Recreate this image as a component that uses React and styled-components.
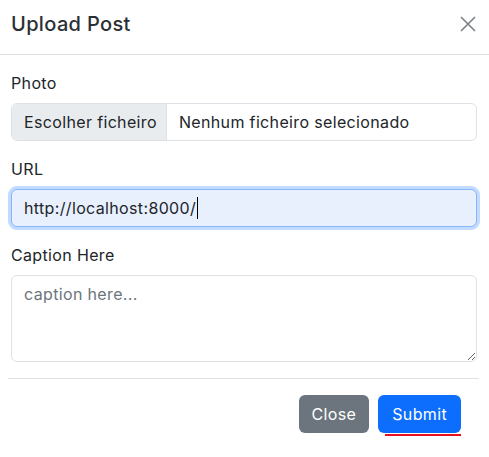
import styled, { createGlobalStyle } from "styled-components";

const GlobalStyle = createGlobalStyle`
  body {
    margin: 0;
    background: #fff;
    font-family: Inter, "Noto Sans", sans-serif;
    color: #212529;
    letter-spacing: 0.35px;
  }
`;

const UploadPost = () => {
  return (
    <Modal>
      <GlobalStyle />
      <Header>
        <Title>Upload Post</Title>
        <CloseIcon aria-label="Close">
          <svg width="16" height="16" viewBox="0 0 16 16">
            <path d="M1 1L15 15M15 1L1 15" stroke="#6c757d" strokeWidth="1.6" />
          </svg>
        </CloseIcon>
      </Header>
      <Body>
        <Field>
          <Label>Photo</Label>
          <FileInput>
            <FileButton>Escolher ficheiro</FileButton>
            <FileName>Nenhum ficheiro selecionado</FileName>
          </FileInput>
        </Field>
        <Field>
          <Label>URL</Label>
          <TextInput $focused>
            http://localhost:8000/
            <Caret />
          </TextInput>
        </Field>
        <Field>
          <Label>Caption Here</Label>
          <TextArea rows={3} placeholder="caption here..." />
        </Field>
        <Divider />
      </Body>
      <Footer>
        <Button $variant="secondary">Close</Button>
        <Button $variant="primary" $marked>
          Submit
        </Button>
      </Footer>
    </Modal>
  );
};

const Modal = styled.div`
  width: 489px;
  height: 457px;
  background: #fff;
  overflow: hidden;
`;

const Header = styled.div`
  height: 55px;
  box-sizing: border-box;
  display: flex;
  align-items: center;
  justify-content: space-between;
  padding: 0 13px 6px 11px;
  border-bottom: 1px solid #dee2e6;
`;

const Title = styled.h5`
  margin: 0;
  font-size: 20px;
  font-weight: 500;
  line-height: 1.2;
  color: #2b2f33;
`;

const CloseIcon = styled.div`
  width: 16px;
  height: 16px;
  display: flex;
  opacity: 0.9;
`;

const Body = styled.div`
  padding: 16px 12px 0 11px;
`;

const Field = styled.div`
  margin-bottom: 16px;
`;

const Label = styled.div`
  font-size: 16px;
  line-height: 24px;
  margin-bottom: 8px;
  color: #212529;
`;

const FileInput = styled.div`
  display: flex;
  height: 38px;
  box-sizing: border-box;
  border: 1px solid #dee2e6;
  border-radius: 6px;
  overflow: hidden;
  font-size: 16px;
`;

const FileButton = styled.div`
  display: flex;
  align-items: center;
  padding: 0 9px 0 12px;
  background: #e9ecef;
  border-right: 1px solid #dee2e6;
`;

const FileName = styled.div`
  display: flex;
  align-items: center;
  padding: 0 12px;
`;

const TextInput = styled.div`
  display: flex;
  align-items: center;
  height: 38px;
  box-sizing: border-box;
  padding: 0 12px;
  font-size: 16px;
  border-radius: 6px;
  background: #e8f0fe;
  border: 1px solid ${(p) => (p.$focused ? "#86b7fe" : "#dee2e6")};
  box-shadow: ${(p) =>
    p.$focused ? "0 0 0 3px rgba(13, 110, 253, 0.25)" : "none"};
`;

const Caret = styled.span`
  display: inline-block;
  width: 1px;
  height: 22px;
  margin-left: 1px;
  background: #000;
`;

const TextArea = styled.textarea`
  display: block;
  width: 100%;
  height: 87px;
  box-sizing: border-box;
  padding: 6px 12px;
  font-family: inherit;
  font-size: 16px;
  letter-spacing: inherit;
  line-height: 24px;
  color: #212529;
  border: 1px solid #dee2e6;
  border-radius: 6px;
  outline: none;

  &::placeholder {
    color: #6c757d;
  }
`;

const Divider = styled.hr`
  margin: 16px -2px 0 -3px;
  border: 0;
  border-top: 1px solid #dee2e6;
`;

const Footer = styled.div`
  display: flex;
  justify-content: flex-end;
  gap: 9px;
  padding: 16px 28px 0 0;
`;

const Button = styled.button`
  position: relative;
  height: 38px;
  padding: 0 ${(p) => (p.$variant === "primary" ? "14px" : "13px")};
  font-family: inherit;
  font-size: 16px;
  letter-spacing: inherit;
  color: #fff;
  border: 0;
  border-radius: 6px;
  background: ${(p) => (p.$variant === "primary" ? "#0d6efd" : "#6c757d")};

  &::after {
    content: "";
    display: ${(p) => (p.$marked ? "block" : "none")};
    position: absolute;
    left: 7px;
    right: 0;
    bottom: -3px;
    height: 2px;
    background: #e8101e;
  }
`;

export default UploadPost;
